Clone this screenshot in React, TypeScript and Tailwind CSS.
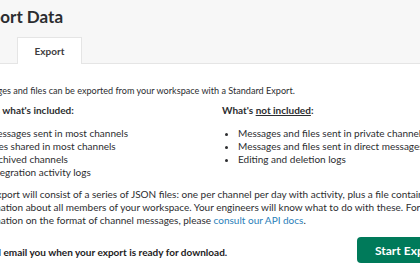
export default function App() {
  return (
    <div className="w-[420px] h-[280px] overflow-hidden bg-white font-[Lato,sans-serif] text-[#2c2d30]">
      {/* Header strip with title and tabs */}
      <div className="bg-[#f7f7f7] border-b border-[#e5e5e5]">
        <div className="-ml-7 w-[500px] pt-[7px]">
          <h1 className="text-[17px] leading-[20px] font-bold text-[#2c2d30] whitespace-nowrap">Export Data</h1>
          <div className="flex mt-[10px] pl-[45px]">
            <div className="-mb-px h-[27px] w-[65px] bg-white border border-b-0 border-[#e5e5e5] flex items-center justify-center text-[10px] font-bold text-[#3d3c40]">
              Export
            </div>
          </div>
        </div>
      </div>

      {/* Body */}
      <div className="-ml-7 w-[500px] pt-[20px] text-[10px] leading-[13px] whitespace-nowrap">
        <p className="text-[9.1px]">Messages and files can be exported from your workspace with a Standard Export.</p>

        <div className="grid grid-cols-2 mt-[7px]">
          <div>
            <p className="font-bold">Here's what's included:</p>
            <ul className="list-disc pl-4 mt-[10px]">
              <li>Messages sent in most channels</li>
              <li>Files shared in most channels</li>
              <li>Archived channels</li>
              <li>Integration activity logs</li>
            </ul>
          </div>
          <div>
            <p className="font-bold">
              What's <span className="underline">not included</span>:
            </p>
            <ul className="list-disc pl-4 mt-[10px]">
              <li>Messages and files sent in private channels</li>
              <li>Messages and files sent in direct messages</li>
              <li>Editing and deletion logs</li>
            </ul>
          </div>
        </div>

        <p className="mt-[9px]">
          The export will consist of a series of JSON files: one per channel per day with activity, plus a file containing
          <br />
          information about all members of your workspace. Your engineers will know what to do with these. For more
          <br />
          information on the format of channel messages, please{" "}
          <a className="text-[#2a80b9]" href="#">consult our API docs</a>.
        </p>

        <div className="flex items-start justify-between mt-[10px]">
          <p className="mt-[9px] -ml-[4px] font-bold text-[#1d1c1d]">We will email you when your export is ready for download.</p>
          <button className="h-[26px] w-[115px] rounded bg-[#007a5a] text-white text-[12px] font-bold text-left pl-[18px]">
            Start Export
          </button>
        </div>
      </div>
    </div>
  )
}
